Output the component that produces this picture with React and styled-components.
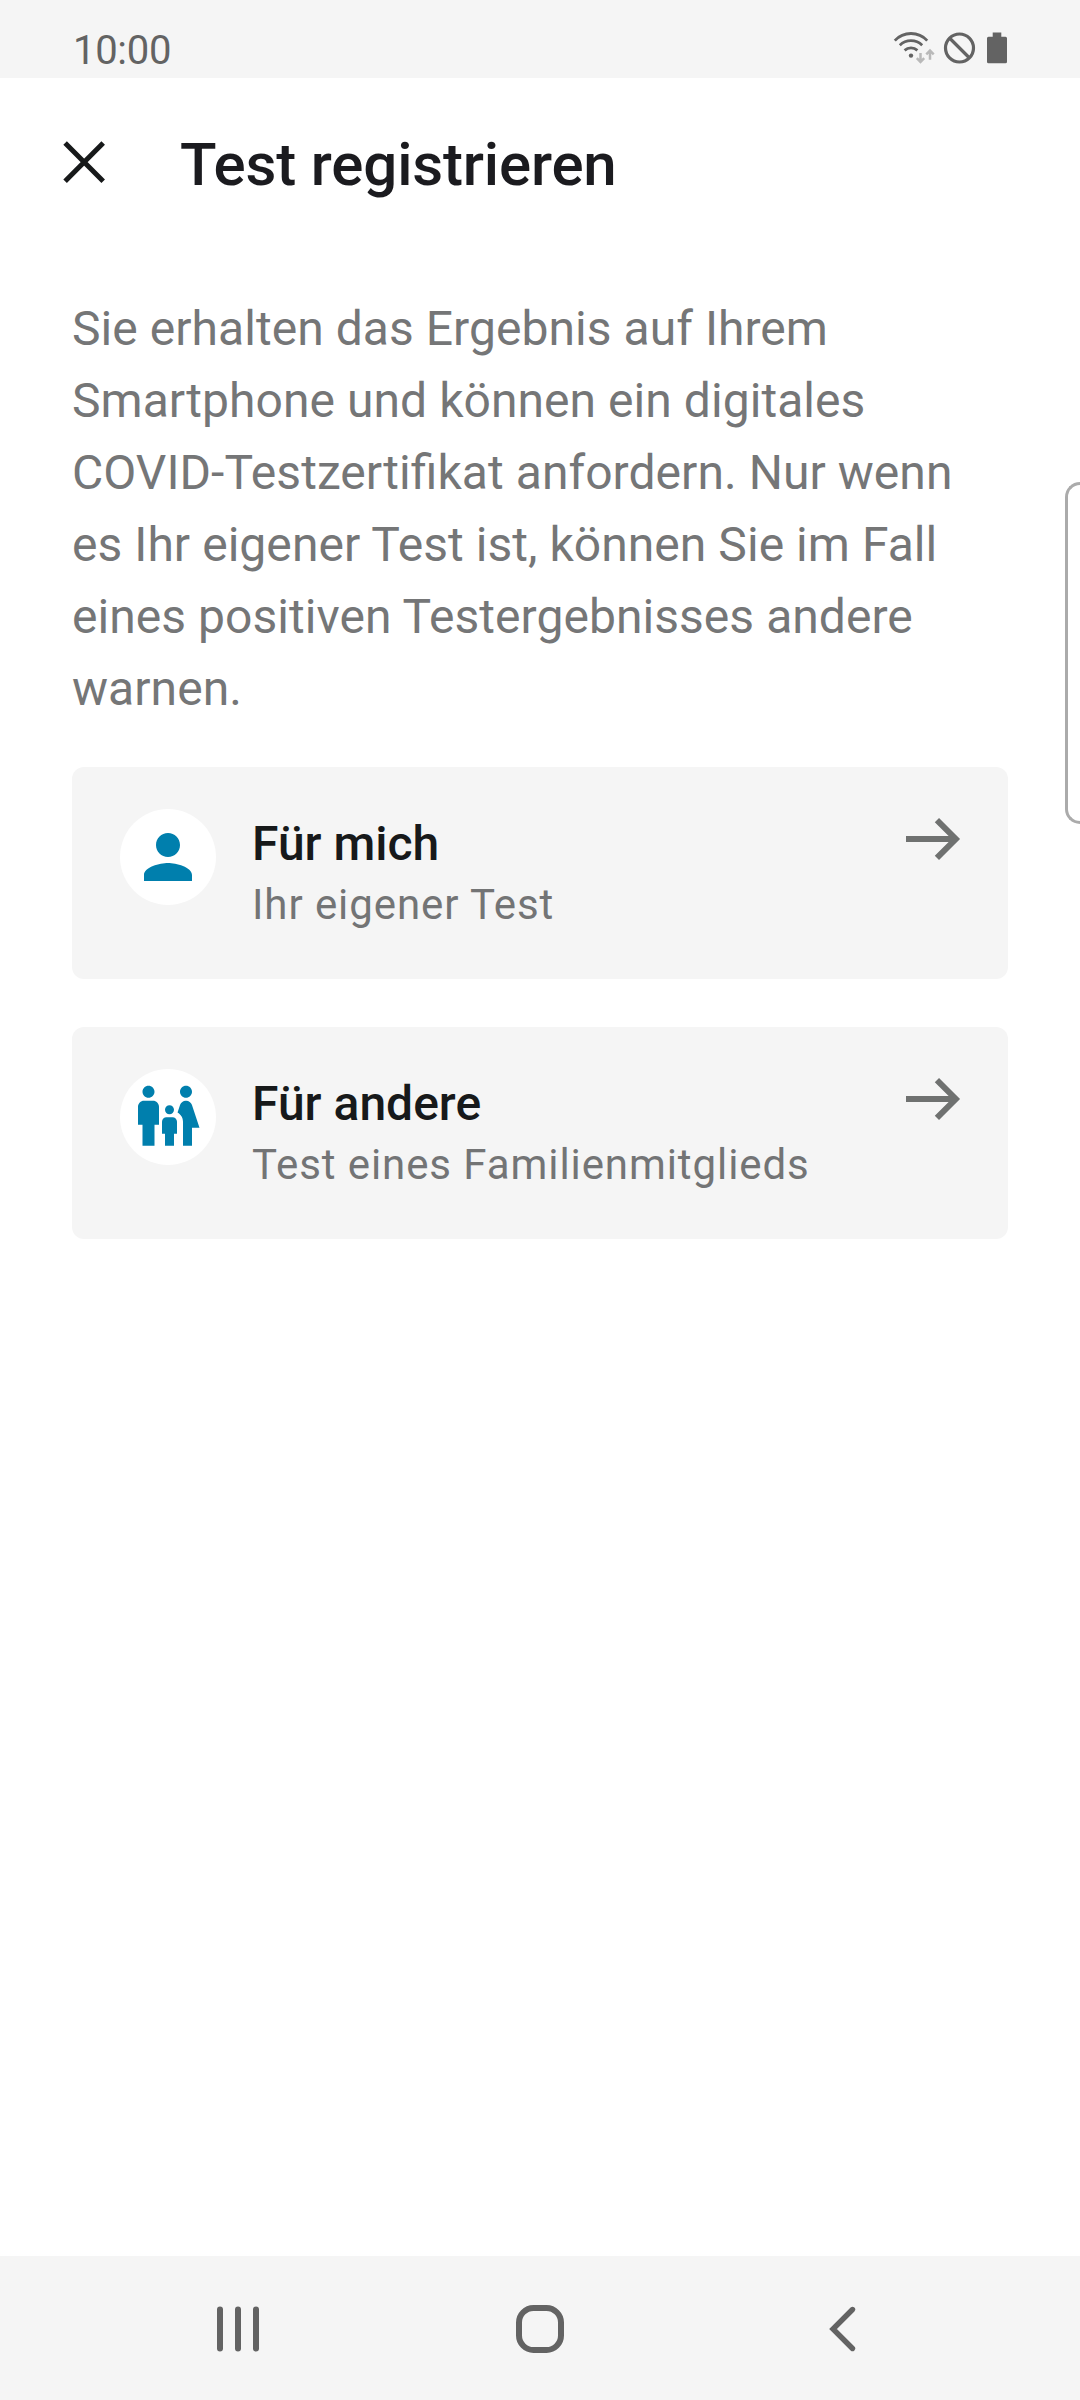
import React from "react";
import styled, { createGlobalStyle } from "styled-components";

const GlobalStyle = createGlobalStyle`
  * { box-sizing: border-box; }
  body { margin: 0; background: #ffffff; }
`;

const Screen = styled.div`
  position: relative;
  display: flex;
  flex-direction: column;
  width: 1080px;
  height: 2400px;
  overflow: hidden;
  background: #ffffff;
  font-family: Roboto, "Liberation Sans", sans-serif;
`;

const StatusBar = styled.header`
  display: flex;
  justify-content: space-between;
  height: 78px;
  padding: 26px 72px 0 73px;
  background: #f5f5f5;
`;

const Clock = styled.time`
  margin-top: 1px;
  font-size: 40px;
  line-height: 48px;
  letter-spacing: -0.3px;
  color: #636363;
`;

const StatusIcons = styled.svg`
  width: 116px;
  height: 40px;
`;

const TopBar = styled.div`
  display: flex;
  align-items: center;
  height: 168px;
  padding-left: 48px;
  gap: 60px;
`;

const CloseButton = styled.button`
  display: flex;
  width: 72px;
  height: 72px;
  padding: 0;
  border: 0;
  background: none;
`;

const Title = styled.h1`
  margin: 6px 0 0;
  font-size: 60px;
  font-weight: 500;
  line-height: 72px;
  letter-spacing: -0.17px;
  color: #1b1b1f;
`;

const Content = styled.main`
  display: flex;
  flex: 1;
  flex-direction: column;
  padding: 47px 72px 0;
`;

const Intro = styled.p`
  margin: 0 0 42px;
  font-size: 48px;
  line-height: 72px;
  letter-spacing: 0.05px;
  font-feature-settings: "liga" 1;
  color: #757677;
`;

const Options = styled.div`
  display: flex;
  flex-direction: column;
  gap: 48px;
`;

const Card = styled.button`
  display: flex;
  align-items: flex-start;
  height: 212px;
  padding: 42px 36px 0 48px;
  border: 0;
  border-radius: 12px;
  background: #f5f5f5;
  font-family: inherit;
  text-align: left;
`;

const Avatar = styled.span`
  display: flex;
  align-items: center;
  justify-content: center;
  flex: none;
  width: 96px;
  height: 96px;
  border-radius: 50%;
  background: #ffffff;
`;

const CardText = styled.span`
  display: flex;
  flex: 1;
  flex-direction: column;
  padding: 7px 0 0 36px;
`;

const CardTitle = styled.span`
  font-size: 48px;
  font-weight: 500;
  line-height: 56px;
  color: #17191a;
`;

const CardSubtitle = styled.span`
  margin-top: 4px;
  font-size: 42px;
  line-height: 58px;
  letter-spacing: 0.92px;
  color: #737475;
`;

const Icon = styled.svg`
  display: block;
  flex: none;
  width: 72px;
  height: 72px;
`;

const ArrowIcon = styled(Icon)`
  margin-top: -6px;
`;

const EdgeHandle = styled.div`
  position: absolute;
  top: 482px;
  right: 0;
  width: 15px;
  height: 342px;
  border: 3px solid #ababab;
  border-right: 0;
  border-radius: 15px 0 0 15px;
`;

const NavBar = styled.nav`
  display: flex;
  justify-content: space-between;
  align-items: center;
  height: 144px;
  padding: 2px 202px 0;
  background: #f5f5f5;
`;

const NavButton = styled.button`
  display: flex;
  padding: 0;
  border: 0;
  background: none;
`;

const PERSON =
  "M12 12c2.21 0 4-1.79 4-4s-1.79-4-4-4-4 1.79-4 4 1.79 4 4 4zm0 2c-2.67 0-8 1.34-8 4v2h16v-2c0-2.66-5.33-4-8-4z";
const FAMILY =
  "M16 4c0-1.11.89-2 2-2s2 .89 2 2-.89 2-2 2-2-.89-2-2zM20 22v-6h2.5l-2.54-7.63C19.68 7.55 18.92 7 18.06 7h-.12c-.86 0-1.63.55-1.9 1.37l-.86 2.58C16.26 11.55 17 12.68 17 14v8h3zM12.5 11.5c.83 0 1.5-.67 1.5-1.5s-.67-1.5-1.5-1.5S11 9.17 11 10s.67 1.5 1.5 1.5zM5.5 6c1.11 0 2-.89 2-2s-.89-2-2-2-2 .89-2 2 .89 2 2 2zM7.5 22v-7H9V9c0-1.1-.9-2-2-2H4C2.9 7 2 7.9 2 9v6h1.5v7h4zM14 22v-4h1v-4c0-.82-.68-1.5-1.5-1.5h-2c-.82 0-1.5.68-1.5 1.5v4h1v4h3z";

const OPTIONS = [
  { title: "Für mich", subtitle: "Ihr eigener Test", path: PERSON, viewBox: "0 0 24 24" },
  { title: "Für andere", subtitle: "Test eines Familienmitglieds", path: FAMILY, viewBox: "0 0.44 24 24" },
];

function Option({ title, subtitle, path, viewBox }) {
  return (
    <Card type="button">
      <Avatar>
        <Icon viewBox={viewBox} fill="#007fad">
          <path d={path} />
        </Icon>
      </Avatar>
      <CardText>
        <CardTitle>{title}</CardTitle>
        <CardSubtitle>{subtitle}</CardSubtitle>
      </CardText>
      <ArrowIcon viewBox="0 0 72 72" fill="none" stroke="#6f7170" strokeWidth="6">
        <path d="M6 36H56M36.9 17.1L55.8 36L36.9 54.9" />
      </ArrowIcon>
    </Card>
  );
}

export default function App() {
  return (
    <Screen>
      <GlobalStyle />
      <StatusBar>
        <Clock>10:00</Clock>
        <StatusIcons viewBox="892 26 116 40" fill="none" stroke="#636363" strokeWidth="2.8">
          <path d="M894.8 40.6A22 22 0 0 1 927.2 40.6M899.8 45.2A16 16 0 0 1 922.2 45.2M904.6 50.4A9.5 9.5 0 0 1 917.4 50.4" />
          <circle cx="911" cy="55.6" r="2.2" fill="#636363" stroke="none" />
          <path d="M920.5 53V61.5M916.8 58.2L920.5 61.9L924.2 58.2M930 59.8V51M926.3 54.3L930 50.6L933.7 54.3" stroke="#b9b9b9" strokeWidth="2.5" />
          <circle cx="959.5" cy="48" r="14" strokeWidth="3.2" />
          <path d="M950 38.5L969 57.5" strokeWidth="3.2" />
          <path d="M992.7 32.4h8.6v4.4h4.2q1.5 0 1.5 1.5v23.4q0 1.5-1.5 1.5h-17q-1.5 0-1.5-1.5V38.3q0-1.5 1.5-1.5h4.2z" fill="#636363" stroke="none" />
        </StatusIcons>
      </StatusBar>
      <TopBar>
        <CloseButton aria-label="Schließen">
          <Icon viewBox="48 126 72 72" fill="none" stroke="#17191a" strokeWidth="5">
            <path d="M65.1 143.1L103.2 181.2M103.2 143.1L65.1 181.2" />
          </Icon>
        </CloseButton>
        <Title>Test registrieren</Title>
      </TopBar>
      <Content>
        <Intro>
          Sie erhalten das Ergebnis auf Ihrem Smartphone und können ein digitales COVID-Testzertifikat anfordern. Nur
          wenn es Ihr eigener Test ist, können Sie im Fall eines positiven Testergebnisses andere warnen.
        </Intro>
        <Options>
          {OPTIONS.map((option) => (
            <Option key={option.title} {...option} />
          ))}
        </Options>
      </Content>
      <EdgeHandle />
      <NavBar>
        <NavButton aria-label="Übersicht">
          <Icon viewBox="202 2293 72 72" fill="none" stroke="#636363" strokeWidth="6" strokeLinecap="round">
            <path d="M220 2309.5V2348.5M238 2309.5V2348.5M256 2309.5V2348.5" />
          </Icon>
        </NavButton>
        <NavButton aria-label="Startseite">
          <Icon viewBox="504 2293 72 72" fill="none" stroke="#636363" strokeWidth="6">
            <rect x="519" y="2308" width="42" height="42" rx="14.5" />
          </Icon>
        </NavButton>
        <NavButton aria-label="Zurück">
          <Icon viewBox="806 2293 72 72" fill="none" stroke="#636363" strokeWidth="5.4" strokeLinecap="round">
            <path d="M852.5 2309.5L833 2329L852.5 2348.5" />
          </Icon>
        </NavButton>
      </NavBar>
    </Screen>
  );
}
